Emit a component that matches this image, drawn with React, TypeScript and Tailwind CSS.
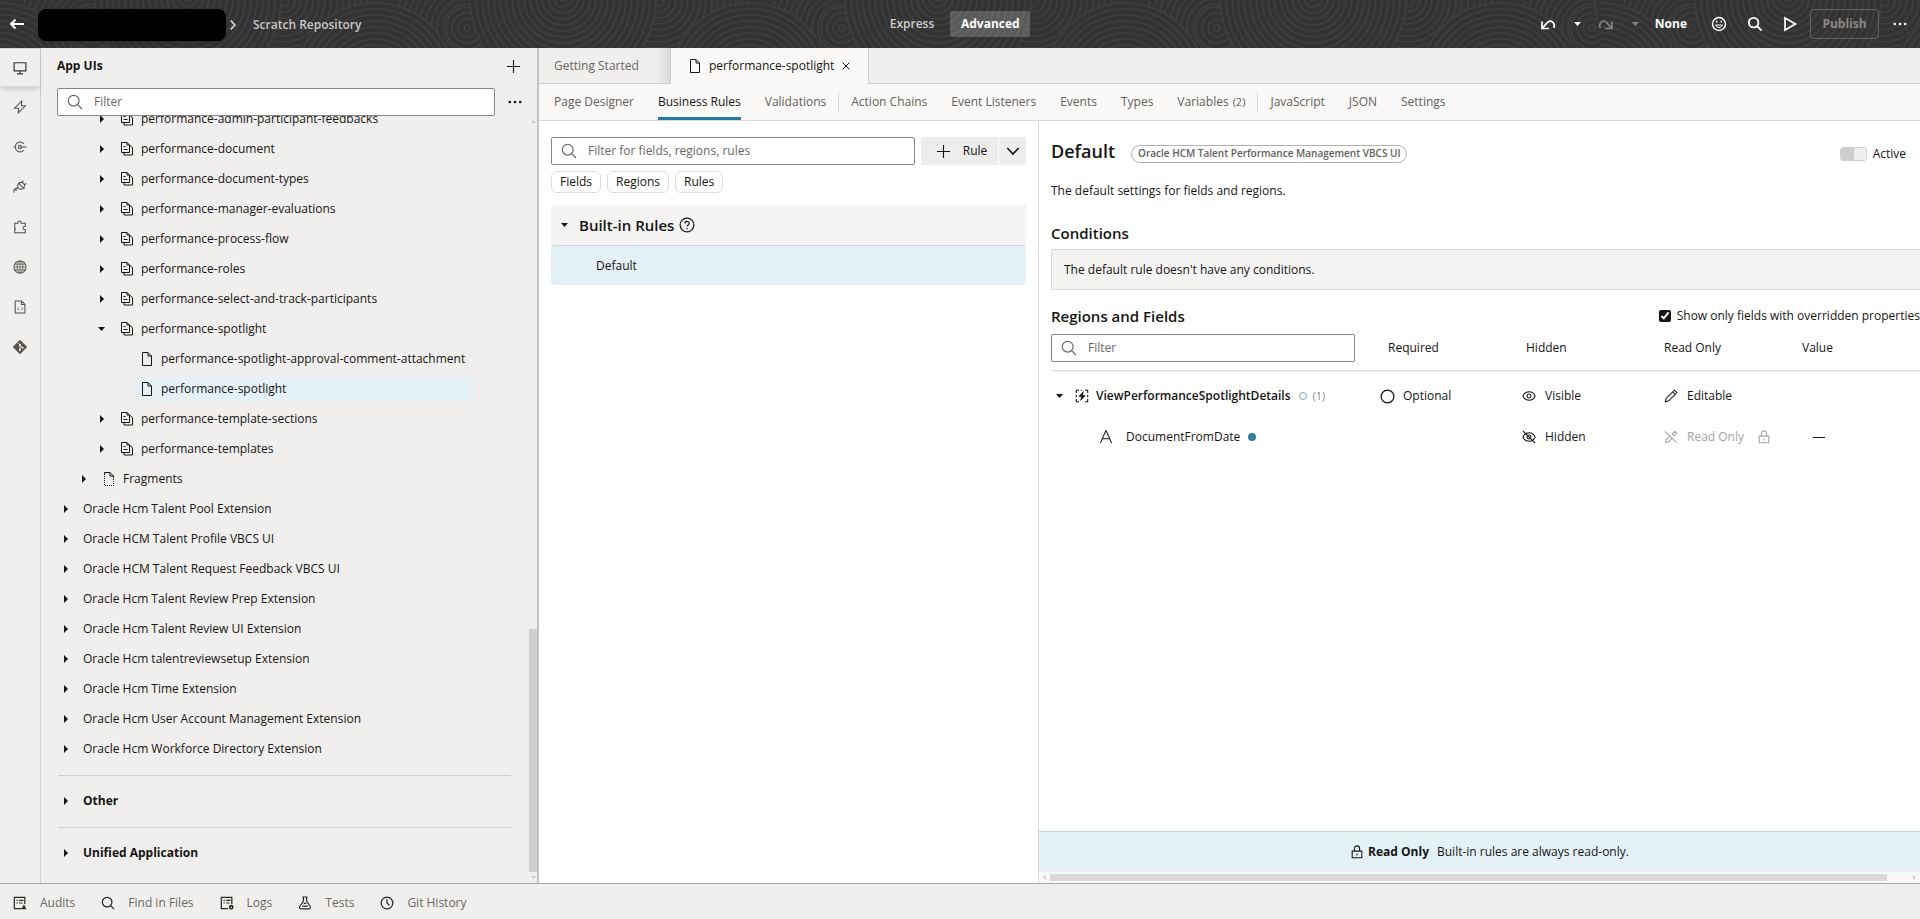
import React, { useState } from "react";

interface IconProps {
  className?: string;
  children: React.ReactNode;
}

// all line icons share a 16x16 box
const Svg: React.FC<IconProps> = ({ className = "size-4", children }) => (
  <svg
    className={`shrink-0 ${className}`}
    viewBox="0 0 16 16"
    fill="none"
    stroke="currentColor"
    strokeWidth="1.2"
    aria-hidden="true"
  >
    {children}
  </svg>
);

const SearchIcon = ({ className }: { className?: string }) => (
  <Svg className={className}>
    <circle cx="6.7" cy="6.7" r="5.4" />
    <path d="M10.6 10.6 15 15" />
  </Svg>
);

const PlusIcon = () => (
  <Svg className="size-[15px]">
    <path d="M8 1v14M1 8h14" />
  </Svg>
);

const DotsIcon = () => (
  <Svg>
    <g fill="currentColor" stroke="none">
      <circle cx="2.8" cy="8" r="1.3" />
      <circle cx="8" cy="8" r="1.3" />
      <circle cx="13.2" cy="8" r="1.3" />
    </g>
  </Svg>
);

const Caret = ({ open = false }: { open?: boolean }) => (
  <svg className="w-[7px] h-2 shrink-0" viewBox="0 0 7 8" fill="currentColor" aria-hidden="true">
    <path d={open ? "M0 2h7L3.5 6z" : "M2 0v8l4-4z"} />
  </svg>
);

const PageIcon = () => (
  <svg className="w-3 h-[14px] shrink-0" viewBox="0 0 12 14" fill="none" stroke="currentColor" aria-hidden="true">
    <path d="M1.5.5H7l3.500 3.500v9.500h-9z" />
    <path d="M7 .5V4h3.500" />
  </svg>
);

const FlowIcon = () => (
  <svg className="w-3 h-[14px] shrink-0" viewBox="0 0 12 14" fill="none" stroke="currentColor" aria-hidden="true">
    <path d="M.5.5H6L8.500 3v7.500h-8z" />
    <path d="M6 .5V3h2.500M2.500 4.500h2M2.500 7.500h4" />
    <path d="M3 10.500v2.500h8.500V5.500L9 3.500" />
  </svg>
);

const FragmentIcon = () => (
  <svg className="w-3 h-[14px] shrink-0" viewBox="0 0 12 14" fill="none" stroke="currentColor" aria-hidden="true">
    <path d="M1.500 3V.5H7l3.500 3.500v2M7 .5V4h3.500" />
    <path d="M1.500 4v9.500h9V7" strokeDasharray="1 1" />
  </svg>
);

const LockIcon = () => (
  <Svg className="size-[14px]">
    <path d="M2.500 7h11v7.500h-11zM5 7V4a3 3 0 0 1 6 0v3M8 9.800v2.200" />
  </Svg>
);

const rings = (cx: number, cy: number, max: number) => {
  const list = [];
  for (let r = max; r > 0; r -= 6) {
    list.push(<circle key={r} cx={cx} cy={cy} r={r} />);
  }
  return list;
};

const RingPattern = ({ id }: { id: string }) => (
  <svg className="size-full" aria-hidden="true">
    <pattern id={id} width="375" height="48" patternUnits="userSpaceOnUse">
      <g fill="#333333" stroke="#3f3e3e" strokeWidth="1.6">
        <rect width="375" height="48" stroke="none" />
        {rings(283, 0, 90)}
        {rings(92, 28, 72)}
        {rings(0, 83, 80)}
        {rings(375, 83, 80)}
        {rings(92, 28, 21)}
        {rings(188, -2, 93)}
      </g>
    </pattern>
    <rect width="100%" height="100%" fill={`url(#${id})`} />
  </svg>
);

const Header = () => (
  <header className="relative flex h-12 shrink-0 items-center bg-[#333333] pr-3 text-white">
    <div className="absolute inset-0">
      <RingPattern id="rings" />
    </div>
    <div className="absolute inset-y-0 right-0 w-80">
      <RingPattern id="rings-end" />
    </div>
    <div className="relative flex flex-1 items-center pt-[2px]">
      <button aria-label="Back" className="ml-[9px]">
        <Svg>
          <path d="M15 7H2M6.5 2.5 2 7l4.5 4.5" strokeWidth="2" />
        </Svg>
      </button>
      <div className="ml-[13px] h-8 w-[188px] rounded-lg bg-black shadow-md"></div>
      <Svg className="ml-px mr-[14px] size-3 text-[#d4d2cf]">
        <path d="m5 2 5.500 6L5 14" strokeWidth="2.4" />
      </Svg>
      <span className="font-semibold text-[#c9c7c5]">Scratch Repository</span>
    </div>
    <div className="relative flex items-center gap-1">
      <button className="h-[26px] px-3 font-semibold text-[#d0cecc]">Express</button>
      <button className="h-[26px] w-20 rounded-xs bg-white/20 font-bold">Advanced</button>
    </div>
    <div className="relative flex flex-1 items-center justify-end">
      <button aria-label="Undo" className="mr-[18px]">
        <Svg>
          <path d="M2 5.500v7h7M2.300 12.200l5-5.600c3.400-3.600 8.600.4 6.400 5.400" strokeWidth="1.700" />
        </Svg>
      </button>
      <button aria-label="Undo history" className="mr-[17px]"><Caret open /></button>
      <button aria-label="Redo" className="mr-[18px] text-[#858382]" disabled>
        <Svg>
          <path d="M14 5.500v7H7M13.700 12.200l-5-5.600c-3.400-3.600-8.600.4-6.400 5.400" strokeWidth="1.700" />
        </Svg>
      </button>
      <button aria-label="Redo history" className="mr-4 text-[#858382]" disabled><Caret open /></button>
      <button className="mr-6 font-bold">None</button>
      <button aria-label="Feedback" className="mr-5">
        <Svg>
          <circle cx="8" cy="8" r="6.500" strokeWidth="1.400" />
          <path d="M4.600 9c.8 3.200 6 3.200 6.800 0z" strokeWidth="1" />
          <path d="M5.700 4.800v1.700M10.300 4.800v1.700" strokeWidth="1.400" />
        </Svg>
      </button>
      <button aria-label="Search" className="mr-[19px]">
        <Svg>
          <circle cx="6.6" cy="6.6" r="4.8" strokeWidth="1.800" />
          <path d="m10 10 4.6 4.6" strokeWidth="1.800" />
        </Svg>
      </button>
      <button aria-label="Preview" className="mr-3">
        <Svg>
          <path d="M3 2v12l10.5-6z" strokeWidth="1.700" />
        </Svg>
      </button>
      <button className="mr-[13px] h-[30px] w-[69px] rounded-sm border border-[#67615c] font-bold text-[#8b8886]" disabled>
        Publish
      </button>
      <button aria-label="More actions"><DotsIcon /></button>
    </div>
  </header>
);

const railItems = [
  { name: "App UIs", icon: <path d="M1.300 2h13.400v9.400H1.300zM8 11.400v3M4.500 14.600h7" strokeWidth="1.400" /> },
  { name: "Services", icon: <path d="M10 1.200 1.800 9.400h4.600L6 14.800l8.200-8.200H9.600z" /> },
  {
    name: "Endpoints",
    icon: (
      <>
        <path d="M12.6 4.6a5.6 5.6 0 1 0 0 6.8M.5 8h1.8M8 8h7.5" />
        <circle cx="7.8" cy="8" r="1.9" />
      </>
    ),
  },
  {
    name: "Connections",
    icon: (
      <>
        <path d="M5.600 8.600c-.9-2.300.2-4.900 2.400-5.600 2-.6 4.200.3 4.900 2.200.8 2.200-.4 4.500-2.500 5.200-1.900.6-4-.1-4.800-1.800zM6 3.200l7 7" />
        <path d="m10 2.800 1.800-2M13 5.700l2.300-1.800M5.800 9.300l-2.500.2-2.100 1.700v3.300M3.500 9.500v3" />
      </>
    ),
  },
  {
    name: "Components",
    icon: <path d="M2 3.600h3.700c-.6-3.200 4.200-3.200 3.600 0H14v3.700c-3.400-.6-3.400 4 0 3.500v3.700H2v-3.500c1-.3 1-1.200 0-1.600z" />,
  },
  {
    name: "Translations",
    icon: (
      <g strokeWidth=".9">
        <circle cx="8" cy="8" r="6.900" strokeWidth="1.200" />
        <ellipse cx="8" cy="8" rx="3.300" ry="6.900" />
        <path d="M8 1.200v13.600M1.200 8h13.600M2.300 4.700h11.400M2.300 11.300h11.400" />
      </g>
    ),
  },
  {
    name: "Source",
    icon: (
      <>
        <path d="M2.500 1.200h7.300l3.800 3.800v9.800H2.500zM9.600 1.400v3.800h3.800" />
        <path d="m6.700 8.500-1.600 1.600 1.600 1.600M9.500 8.500l1.600 1.600-1.600 1.600" strokeWidth="1" />
      </>
    ),
  },
  {
    name: "Git",
    icon: (
      <>
        <path d="M8 .6 15.400 8 8 15.400.6 8z" fill="currentColor" />
        <path d="M6 3.500 8 5.500v6M8 6l3 3" stroke="#f1efed" strokeWidth="1.100" />
        <g fill="#f1efed" stroke="none">
          <circle cx="8" cy="5.800" r="1.200" />
          <circle cx="8" cy="11.300" r="1.200" />
          <circle cx="11" cy="8.800" r="1.200" />
        </g>
      </>
    ),
  },
];

const Rail = () => (
  <nav className="w-[41px] shrink-0 border-r border-[#cfcdcb]">
    {railItems.map((item, i) => (
      <button
        key={item.name}
        aria-label={item.name}
        className={`flex w-10 items-center justify-center ${
          i === 0 ? "h-[39px] border-y border-[#d9d7d5] text-[#3a3632] shadow-md" : "h-10 text-[#55514d]"
        }`}
      >
        <Svg className="size-[14px]">{item.icon}</Svg>
      </button>
    ))}
  </nav>
);

const flowsBefore = [
  "performance-admin-participant-feedbacks",
  "performance-document",
  "performance-document-types",
  "performance-manager-evaluations",
  "performance-process-flow",
  "performance-roles",
  "performance-select-and-track-participants",
];
const pages = ["performance-spotlight-approval-comment-attachment", "performance-spotlight"];
const flowsAfter = ["performance-template-sections", "performance-templates"];
const extensions = [
  "Oracle Hcm Talent Pool Extension",
  "Oracle HCM Talent Profile VBCS UI",
  "Oracle HCM Talent Request Feedback VBCS UI",
  "Oracle Hcm Talent Review Prep Extension",
  "Oracle Hcm Talent Review UI Extension",
  "Oracle Hcm talentreviewsetup Extension",
  "Oracle Hcm Time Extension",
  "Oracle Hcm User Account Management Extension",
  "Oracle Hcm Workforce Directory Extension",
];

const FlowRow = ({ name, open = false }: { name: string; open?: boolean }) => (
  <li>
    <button className="flex h-[30px] items-center pl-[57px]" aria-expanded={open}>
      <Caret open={open} />
      <span className="ml-4 mr-2"><FlowIcon /></span>
      {name}
    </button>
  </li>
);

const RootRow = ({ name }: { name: string }) => (
  <li>
    <button className="flex h-[30px] items-center gap-[14px] pl-[21px]" aria-expanded={false}>
      <Caret />
      {name}
    </button>
  </li>
);

interface FilterProps {
  id: string;
  placeholder: string;
  className?: string;
}
const Filter: React.FC<FilterProps> = ({ id, placeholder, className = "" }) => {
  const [value, setValue] = useState("");
  return (
    <label
      htmlFor={id}
      className={`flex h-7 items-center gap-[11px] rounded-xs border border-[#88847f] bg-white px-[9px] text-[#6b6762] ${className}`}
    >
      <SearchIcon />
      <input
        id={id}
        type="text"
        aria-label={placeholder}
        placeholder={placeholder}
        value={value}
        onChange={(e) => setValue(e.target.value)}
        className="min-w-0 flex-1 font-normal outline-none placeholder:text-[#6b6762]"
      />
    </label>
  );
};

const Sidebar = () => (
  <aside className="flex w-[498px] shrink-0 flex-col border-r-2 border-[#c4c2c0]">
    <div className="mb-1 flex h-9 items-center justify-between px-4">
      <h2 className="font-bold">App UIs</h2>
      <button aria-label="Add"><PlusIcon /></button>
    </div>
    <div className="flex items-center justify-between pl-4 pr-[14px]">
      <Filter id="tree-filter" placeholder="Filter" className="w-[438px]" />
      <button aria-label="Tree options"><DotsIcon /></button>
    </div>
    <div className="flex min-h-0 flex-1">
      <div className="min-w-0 flex-1 overflow-hidden">
        <ul className="-mt-3">
          {flowsBefore.map((name) => <FlowRow key={name} name={name} />)}
          <FlowRow name="performance-spotlight" open />
          {pages.map((name, i) => (
            <li key={name} className="flex h-[30px] items-center">
              <button
                className={`ml-[95px] flex h-6 w-[335px] items-center gap-2 pl-[5px] ${i === 1 ? "bg-[#e4f1f7]" : ""}`}
              >
                <PageIcon />
                {name}
              </button>
            </li>
          ))}
          {flowsAfter.map((name) => <FlowRow key={name} name={name} />)}
          <li>
            <button className="flex h-[30px] items-center pl-[39px]" aria-expanded={false}>
              <Caret />
              <span className="ml-4 mr-2"><FragmentIcon /></span>
              Fragments
            </button>
          </li>
          {extensions.map((name) => <RootRow key={name} name={name} />)}
        </ul>
        {["Other", "Unified Application"].map((name) => (
          <ul key={name} className="ml-[17px] mr-[18px] mt-[11px] border-t border-[#d2d0ce] font-bold">
            <li>
              <button className="flex h-10 items-center gap-[14px] pl-1 pt-[10px]" aria-expanded={false}>
                <Caret />
                {name}
              </button>
            </li>
          </ul>
        ))}
      </div>
      {/* scrollbar */}
      <div className="flex w-2 flex-col items-center justify-between text-[#cfcdcb]">
        <svg className="mt-1 h-[3px] w-[5px]" viewBox="0 0 5 3" fill="currentColor"><path d="M0 3h5L2.500 0z" /></svg>
        <div className="flex w-2 flex-1 flex-col justify-end pb-1">
          <div className="h-[243px] bg-[#d0cecd]"></div>
        </div>
        <svg className="mb-1 h-[3px] w-[5px]" viewBox="0 0 5 3" fill="currentColor"><path d="M0 0h5L2.500 3z" /></svg>
      </div>
    </div>
  </aside>
);

const EditorTabs = () => (
  <div className="flex h-9 shrink-0 font-medium">
    <button className="w-[132px] border-b border-r border-[#cfcdcb] bg-linear-to-r from-[#f1efed] from-90% to-[#dddbd9] pl-[15px] text-left text-[#6b6762]">
      Getting Started
    </button>
    <div className="flex w-[197px] items-center bg-[#fbf9f8] pl-[18px]">
      <PageIcon />
      <button className="ml-2">performance-spotlight</button>
      <button aria-label="Close tab" className="ml-2">
        <Svg className="size-2">
          <path d="m1 1 14 14M15 1 1 15" strokeWidth="2" />
        </Svg>
      </button>
    </div>
    <div className="flex-1 border-b border-l border-[#cfcdcb]"></div>
  </div>
);

const viewGroups = [
  ["Page Designer", "Business Rules", "Validations"],
  ["Action Chains", "Event Listeners", "Events", "Types", "Variables"],
  ["JavaScript", "JSON", "Settings"],
];

const ViewTabs = () => {
  const [active, setActive] = useState("Business Rules");
  return (
    <nav className="flex h-[37px] shrink-0 items-center border-b border-[#dbd9d7] bg-[#fbf9f8] pl-[3px] font-medium text-[#625e5a]">
      {viewGroups.map((group, i) => (
        <div key={group[0]} className="flex h-full items-center">
          {i > 0 && <div className="h-[21px] w-px bg-[#dbd9d7]"></div>}
          {group.map((name) => (
            <button key={name} onClick={() => setActive(name)} className="h-full px-3">
              <span
                className={`flex h-full items-center border-y-3 border-t-transparent ${
                  active === name ? "border-b-[#227e9e] text-[#161513]" : "border-b-transparent"
                }`}
              >
                {name}
                {name === "Variables" && <span className="ml-1 text-[11px]">(2)</span>}
              </span>
            </button>
          ))}
        </div>
      ))}
    </nav>
  );
};

const RuleList = () => (
  <section className="w-[500px] shrink-0 border-r border-[#dbd9d7] px-3 pt-4">
    <div className="flex items-center">
      <Filter id="rule-filter" placeholder="Filter for fields, regions, rules" className="mr-[6px] flex-1" />
      <button className="flex h-7 w-[77px] items-center justify-center gap-3 rounded-l-xs bg-[#eeedeb] pl-1 font-medium">
        <PlusIcon />
        Rule
      </button>
      <button aria-label="More rule types" className="ml-px flex h-7 w-[27px] items-center justify-center rounded-r-xs bg-[#eeedeb]">
        <Svg className="size-[14px]">
          <path d="m1.500 4.500 6.500 7 6.500-7" strokeWidth="1.800" />
        </Svg>
      </button>
    </div>
    <div className="mt-[6px] flex gap-[6px] font-medium">
      {["Fields", "Regions", "Rules"].map((name) => (
        <button key={name} className="h-[22px] rounded-md border border-[#dfdddb] px-2">{name}</button>
      ))}
    </div>
    <div className="mt-3 flex h-10 items-center bg-[#f5f4f2] pl-[10px]">
      <button aria-label="Collapse Built-in Rules"><Caret open /></button>
      <h3 className="ml-[11px] text-[15px] font-semibold">Built-in Rules</h3>
      <button aria-label="About built-in rules" className="ml-[5px]">
        <Svg>
          <circle cx="8" cy="8" r="6.900" />
          <path d="M5.900 6.500c0-2.800 4.300-2.700 4.300-.2 0 1.700-2.200 1.600-2.200 3.200M8 10.900v1.300" />
        </Svg>
      </button>
    </div>
    <button className="block h-10 w-full rounded-sm border-t border-[#c5d5dc] bg-[#e4f1f7] pl-[45px] text-left">Default</button>
  </section>
);

const Eye = ({ off = false }: { off?: boolean }) => (
  <Svg className="size-[14px]">
    <path d="M1 8c2.800-6.400 11.200-6.400 14 0-2.800 6.400-11.200 6.400-14 0z" />
    <circle cx="8" cy="8" r="2.200" />
    {off && <path d="m1 1 14 14" />}
  </Svg>
);

const FieldTable = () => (
  <table className="w-full table-fixed text-left">
    <thead>
      <tr className="h-9 align-top shadow-[0_2px_2px_#f1efed]">
        <th className="w-[329px] border-b border-[#dbd9d7]">
          <Filter id="field-filter" placeholder="Filter" className="w-[304px]" />
        </th>
        {["Required", "Hidden", "Read Only"].map((name) => (
          <th key={name} className="w-[138px] border-b border-[#dbd9d7] pl-2 pt-[6px] font-medium">{name}</th>
        ))}
        <th className="border-b border-[#dbd9d7] pl-2 pt-[6px] font-medium">Value</th>
      </tr>
    </thead>
    <tbody>
      <tr className="h-[52px]">
        <td>
          <div className="flex items-center pl-[5px]">
            <button aria-label="Collapse region"><Caret open /></button>
            <Svg className="ml-3 mr-[7px] size-[14px]">
              <path d="M4.500 1.500h-3v3M1.500 6.500v3M1.500 11.500v3h3M11.500 1.500h3v3M14.500 6.500v3M14.500 11.500v3h-3M6.500 1.500H8" />
              <path d="M9.500 3 4.500 8.500h3L6.500 13l5-5.500h-3z" fill="currentColor" strokeWidth=".8" />
            </Svg>
            <span className="font-semibold">ViewPerformanceSpotlightDetails</span>
            <span className="ml-2 size-2 rounded-full border border-[#7ba3b3]"></span>
            <span className="ml-[6px] text-[11px] text-[#8b8782]">(1)</span>
          </div>
        </td>
        <td>
          <div className="flex items-center gap-2">
            <Svg className="size-[15px]"><circle cx="8" cy="8" r="6.800" strokeWidth="1.300" /></Svg>
            Optional
          </div>
        </td>
        <td>
          <div className="flex items-center gap-[9px] pl-1"><Eye /> Visible</div>
        </td>
        <td>
          <div className="flex items-center gap-[9px] pl-2">
            <Svg className="size-[14px]">
              <path d="m1.500 14.500 1-4L12 1.300l2.700 2.700L5.500 13.500zM10 3.300 12.700 6" />
            </Svg>
            Editable
          </div>
        </td>
        <td></td>
      </tr>
      <tr className="h-[30px]">
        <td>
          <div className="flex items-center pl-12">
            <Svg className="size-[14px]">
              <path d="M1.500 15 7.800 1h.4l6.300 14M4 10h8" />
            </Svg>
            <span className="ml-[13px]">DocumentFromDate</span>
            <span className="ml-2 size-2 rounded-full bg-[#2d7f9e]"></span>
          </div>
        </td>
        <td></td>
        <td>
          <div className="flex items-center gap-[9px] pl-1"><Eye off /> Hidden</div>
        </td>
        <td className="text-[#a5a2a0]">
          <div className="flex items-center gap-[9px] pl-2">
            <Svg className="size-[14px]">
              <path d="m1 1.500 13.500 13M1.500 14.500l1-3.500 4-4M1.500 14.500l3.800-1L9 9.800M9.500 4.500l2.800-3 2.300 2.300-3 2.800z" />
            </Svg>
            Read Only
            <span className="ml-1"><LockIcon /></span>
          </div>
        </td>
        <td className="pl-[19px]">
          <div className="h-px w-3 bg-[#161513]"></div>
        </td>
      </tr>
    </tbody>
  </table>
);

const RuleDetail = () => {
  const [onlyOverridden, setOnlyOverridden] = useState(true);
  return (
    <section className="flex min-w-0 flex-1 flex-col">
      <div className="flex-1 pl-3 pt-4">
        <div className="flex items-center">
          <h1 className="text-lg/7 font-semibold">Default</h1>
          <span className="ml-4 mt-[5px] flex h-[18px] items-center rounded-full border border-[#b5b1ad] px-[6px] text-[10px] font-semibold text-[#625e5a]">
            Oracle HCM Talent Performance Management VBCS UI
          </span>
          <label className="ml-auto mt-[6px] flex items-center gap-[6px] pr-[14px] font-medium">
            <input type="checkbox" role="switch" defaultChecked disabled className="peer sr-only" />
            <span className="flex h-[14px] w-[27px] justify-end rounded-sm bg-[#d0cecd] p-px">
              <span className="w-3 rounded-xs bg-[#f1efed]"></span>
            </span>
            Active
          </label>
        </div>
        <p className="mt-[18px]">The default settings for fields and regions.</p>
        <h2 className="mt-6 text-[15px]/5 font-semibold">Conditions</h2>
        <p className="mt-[6px] flex h-[41px] items-center rounded-l-xs border border-r-0 border-[#dbd9d7] bg-[#f5f4f2] pl-3">
          The default rule doesn't have any conditions.
        </p>
        <div className="mt-4 flex items-center justify-between">
          <h2 className="text-[15px]/5 font-semibold">Regions and Fields</h2>
          <label className="flex items-center gap-[6px]">
            <input
              type="checkbox"
              checked={onlyOverridden}
              onChange={(e) => setOnlyOverridden(e.target.checked)}
              className="size-3 accent-[#161513]"
            />
            Show only fields with overridden properties
          </label>
        </div>
        <div className="mt-2">
          <FieldTable />
        </div>
      </div>
      <div className="flex h-[41px] items-center justify-center border-t border-[#c5d3da] bg-[#e4f1f7] pl-5">
        <LockIcon />
        <span className="ml-1 mr-2 font-bold">Read Only</span>
        Built-in rules are always read-only.
      </div>
      {/* scrollbar */}
      <div className="flex h-[11px] items-center bg-[#fbf9f8] px-1 text-[#cfcdcb]">
        <svg className="h-[5px] w-[3px]" viewBox="0 0 3 5" fill="currentColor"><path d="M3 0v5L0 2.500z" /></svg>
        <div className="ml-1 mr-[26px] h-[7px] flex-1 bg-[#dbd9d8]"></div>
        <svg className="h-[5px] w-[3px]" viewBox="0 0 3 5" fill="currentColor"><path d="M0 0v5l3-2.500z" /></svg>
      </div>
    </section>
  );
};

const footerItems = [
  {
    name: "Audits",
    icon: (
      <>
        <path d="M10 14.500H1.500v-13h12V9M4 5h1.500M7 5h5M4 8h1.500M7 8h4" strokeWidth="1.400" />
        <path d="m12.500 9.500 2.800 5.500H9.700z" fill="currentColor" stroke="none" />
      </>
    ),
  },
  { name: "Find in Files", icon: <><circle cx="7" cy="7" r="5.500" strokeWidth="1.400" /><path d="m11 11 4 4" strokeWidth="1.400" /></> },
  {
    name: "Logs",
    icon: (
      <>
        <path d="M9 14.500H1.500v-13h12V9M4 5h1.500M7 5h5M4 8h1.500M7 8h4" strokeWidth="1.400" />
        <circle cx="12.800" cy="12.800" r="1.800" strokeWidth="1.900" />
      </>
    ),
  },
  {
    name: "Tests",
    icon: <path d="M5 1.200h6M6.200 1.500v4.300L2 12c-.6 1.500 0 2.700 1.500 2.700h9c1.500 0 2.100-1.200 1.500-2.700L9.800 5.800V1.500M6.500 8.500h3M4.800 11.500h6.400" strokeWidth="1.300" />,
  },
  { name: "Git History", icon: <><circle cx="8" cy="8" r="6.700" strokeWidth="1.400" /><path d="M8 3.800V8l2.800 2.500" strokeWidth="1.400" /></> },
];

const Footer = () => (
  <footer className="flex h-9 shrink-0 items-center gap-[26px] border-t border-[#aaa8a6] pl-[13px] pt-[2px] text-[#6b6762]">
    {footerItems.map((item) => (
      <button key={item.name} className="flex items-center gap-[13px]">
        <Svg className="size-[14px] text-[#2b2825]">{item.icon}</Svg>
        {item.name}
      </button>
    ))}
  </footer>
);

export default function App() {
  return (
    <div className="flex h-screen flex-col overflow-hidden bg-[#f1efed] font-['Open_Sans','Noto_Sans',sans-serif] text-xs text-[#161513]">
      <Header />
      <div className="flex min-h-0 flex-1">
        <Rail />
        <Sidebar />
        <main className="flex min-w-0 flex-1 flex-col">
          <EditorTabs />
          <ViewTabs />
          <div className="flex min-h-0 flex-1 bg-white">
            <RuleList />
            <RuleDetail />
          </div>
        </main>
      </div>
      <Footer />
    </div>
  );
}
